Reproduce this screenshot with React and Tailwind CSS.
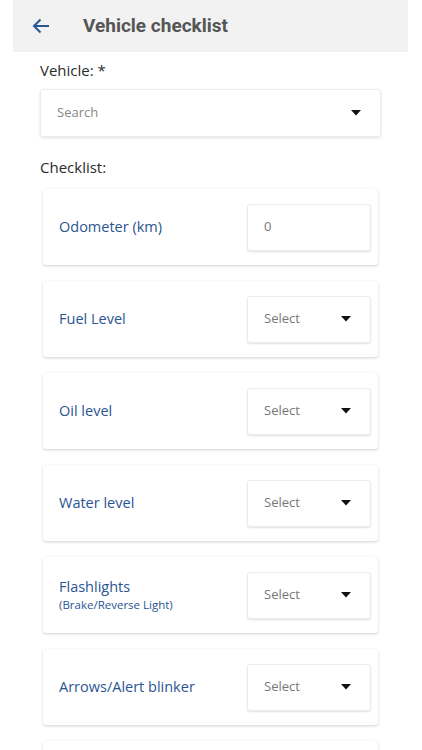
import React from 'react';

const items = [
  { label: 'Odometer (km)', type: 'input', value: '0' },
  { label: 'Fuel Level' },
  { label: 'Oil level' },
  { label: 'Water level' },
  { label: 'Flashlights', sub: '(Brake/Reverse Light)' },
  { label: 'Arrows/Alert blinker' },
  { label: '', type: 'empty' },
];

const Caret = () => (
  <svg width="10" height="6" viewBox="0 0 10 6" className="shrink-0">
    <path d="M0 0h10L5 5.5z" fill="#111" />
  </svg>
);

const ChecklistCard = ({ item }) => (
  <div className="bg-white rounded-[3px] shadow-[0_1px_3px_rgba(0,0,0,0.18)] h-[76px] flex items-center justify-between pl-4 pr-[7px]">
    {item.type !== 'empty' && (
      <>
        <div className="text-[#2a5592]">
          <div className="text-[14.5px] leading-5">{item.label}</div>
          {item.sub && <div className="text-[11.5px] leading-4">{item.sub}</div>}
        </div>
        <div className="w-[124px] h-[47px] bg-white rounded-[3px] border border-[#ececec] shadow-[0_1px_2px_rgba(0,0,0,0.12)] flex items-center justify-between pl-4 pr-[19px] text-[13px] text-[#777]">
          <span>{item.type === 'input' ? item.value : 'Select'}</span>
          {item.type !== 'input' && <Caret />}
        </div>
      </>
    )}
  </div>
);

export default function App() {
  return (
    <div className="w-[422px] h-[750px] overflow-hidden bg-white" style={{ fontFamily: '"Open Sans", sans-serif' }}>
      <div className="mx-[13px] w-[395px] h-[52px] bg-[#f2f2f2] flex items-center pl-[19px]">
        <svg width="18" height="16" viewBox="0 0 18 16" fill="none" stroke="#2a5592" strokeWidth="2">
          <path d="M17 8H2M8.5 1.5L2 8l6.5 6.5" />
        </svg>
        <h1 className="ml-[33px] text-[19px] font-bold text-[#555]" style={{ fontFamily: 'Roboto, sans-serif' }}>
          Vehicle checklist
        </h1>
      </div>

      <div className="px-10 pt-[8px]">
        <div className="text-[15px] font-medium text-[#2b2b2b] leading-5">Vehicle: *</div>
        <div className="mt-[9px] w-[341px] h-[48px] rounded-[3px] border border-[#ececec] shadow-[0_1px_3px_rgba(0,0,0,0.12)] flex items-center justify-between pl-4 pr-[19px]">
          <span className="text-[13px] text-[#888]">Search</span>
          <Caret />
        </div>
        <div className="mt-[20px] text-[15px] font-medium text-[#2b2b2b] leading-5">Checklist:</div>
      </div>

      <div className="ml-[43px] w-[335px] mt-[12px] flex flex-col gap-4">
        {items.map((item, i) => (
          <ChecklistCard key={i} item={item} />
        ))}
      </div>
    </div>
  );
}
